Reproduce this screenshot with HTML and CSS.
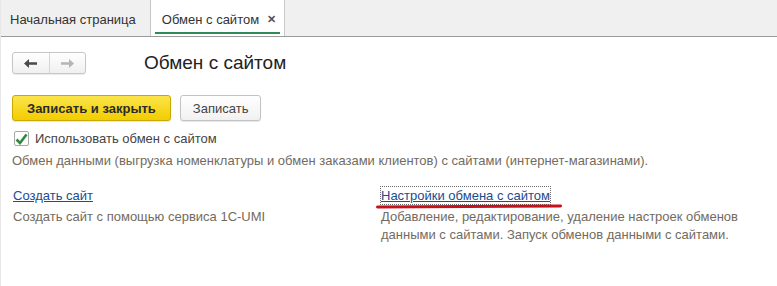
FILE: index.html
```html
<!DOCTYPE html>
<html lang="ru">
<head>
    <meta charset="UTF-8">
    <title>Обмен с сайтом</title>
    <link rel="stylesheet" href="styles.css">
</head>
<body>
    <div class="tabs">
        <div class="tab">Начальная страница</div>
        <div class="tab active">
            <span>Обмен с сайтом</span>
            <span class="tab-close">✕</span>
        </div>
    </div>

    <div class="form">
        <div class="form-header">
            <div class="nav-buttons">
                <button class="nav-btn">
                    <svg width="13" height="9" viewBox="0 0 13 9"><path d="M0 4.5 L5 0 V3.2 H13 V5.8 H5 V9 Z" fill="#4a4a4a"/></svg>
                </button>
                <button class="nav-btn">
                    <svg width="13" height="9" viewBox="0 0 13 9"><path d="M13 4.5 L8 0 V3.2 H0 V5.8 H8 V9 Z" fill="#b5b5b5"/></svg>
                </button>
            </div>
            <h1 class="title">Обмен с сайтом</h1>
        </div>

        <div class="toolbar">
            <button class="btn btn-primary">Записать и закрыть</button>
            <button class="btn">Записать</button>
        </div>

        <label class="check">
            <span class="check-box">
                <svg width="13" height="12" viewBox="0 0 13 12"><path d="M1.5 6.5 L5 10 L11.5 1.5" fill="none" stroke="#2f8a3c" stroke-width="2.6"/></svg>
            </span>
            Использовать обмен с сайтом
        </label>
        <p class="note">Обмен данными (выгрузка номенклатуры и обмен заказами клиентов) с сайтами (интернет-магазинами).</p>

        <div class="columns">
            <div class="column">
                <a class="link" href="#">Создать сайт</a>
                <p class="note">Создать сайт с помощью сервиса 1С-UMI</p>
            </div>
            <div class="column">
                <a class="link focused" href="#">Настройки обмена с сайтом</a>
                <p class="note">Добавление, редактирование, удаление настроек обменов данными с сайтами. Запуск обменов данными с сайтами.</p>
            </div>
        </div>
    </div>
</body>
</html>
```

FILE: styles.css
```css
* {
    margin: 0;
    padding: 0;
    box-sizing: border-box;
}

body {
    font-family: "Liberation Sans", Arial, sans-serif;
    font-size: 13px;
    color: #333;
    background: #fff;
    border-left: 1px solid #e8e8e8;
    height: 100vh;
}

.tabs {
    display: flex;
    height: 37px;
    background: #f0f0f0;
    border-bottom: 1px solid #9a9a9a;
}

.tab {
    display: flex;
    align-items: center;
    padding: 2px 14px 0 9px;
    color: #333;
    border-right: 1px solid #c8c8c8;
}

.tab.active {
    position: relative;
    background: #fff;
    padding: 2px 8px 0 11px;
    gap: 8px;
}

.tab.active::after {
    content: "";
    position: absolute;
    left: 4px;
    right: 4px;
    bottom: 2px;
    height: 2px;
    background: #2e8b57;
}

.tab-close {
    font-size: 11px;
    font-weight: bold;
    color: #555;
}

.form {
    padding: 15px 11px;
}

.form-header {
    display: flex;
    align-items: center;
    gap: 58px;
    margin-bottom: 21px;
}

.nav-buttons {
    display: flex;
    width: 74px;
    height: 22px;
    border: 1px solid #c6c6c6;
    border-radius: 3px;
    background: linear-gradient(#fff, #f0f0f0);
    box-shadow: 0 1px 1px rgba(0,0,0,0.08);
}

.nav-btn {
    flex: 1;
    border: none;
    background: transparent;
    display: flex;
    align-items: center;
    justify-content: center;
}

.nav-btn + .nav-btn {
    border-left: 1px solid #d6d6d6;
}

.title {
    font-size: 19px;
    font-weight: normal;
    color: #222;
}

.toolbar {
    display: flex;
    gap: 9px;
    margin-bottom: 10px;
}

.btn {
    height: 26px;
    padding: 0 12px;
    font-family: inherit;
    font-size: 13px;
    color: #444;
    border: 1px solid #c3c3c3;
    border-radius: 3px;
    background: linear-gradient(#fff, #f1f1f1);
    box-shadow: 0 1px 1px rgba(0,0,0,0.1);
}

.btn-primary {
    font-weight: bold;
    color: #2b2b2b;
    padding: 0 14px;
    border-color: #c9a900;
    background: linear-gradient(#fbe44a, #f2cd00);
}

.check {
    display: flex;
    align-items: center;
    gap: 6px;
    margin-left: 2px;
    color: #444;
}

.check-box {
    width: 15px;
    height: 15px;
    border: 1px solid #a8a8a8;
    border-radius: 2px;
    display: flex;
    align-items: center;
    justify-content: center;
    background: #fff;
}

.note {
    color: #736b5e;
    line-height: 18px;
}

.check + .note {
    margin-top: 6px;
}

.columns {
    display: grid;
    grid-template-columns: 368px 1fr;
    margin-top: 17px;
}

.column {
    display: flex;
    flex-direction: column;
    align-items: flex-start;
    gap: 4px;
    padding-left: 1px;
}

.column .note {
    max-width: 365px;
}

.link {
    color: #224b8f;
    text-decoration: underline;
    line-height: 17px;
}

.link.focused {
    position: relative;
    outline: 1px dotted #6a6a6a;
    outline-offset: 0;
}

.link.focused::after {
    content: "";
    position: absolute;
    left: -5px;
    right: -12px;
    bottom: -4px;
    height: 3px;
    border-radius: 2px;
    background: #c8101a;
    transform: rotate(-0.3deg);
}
```
